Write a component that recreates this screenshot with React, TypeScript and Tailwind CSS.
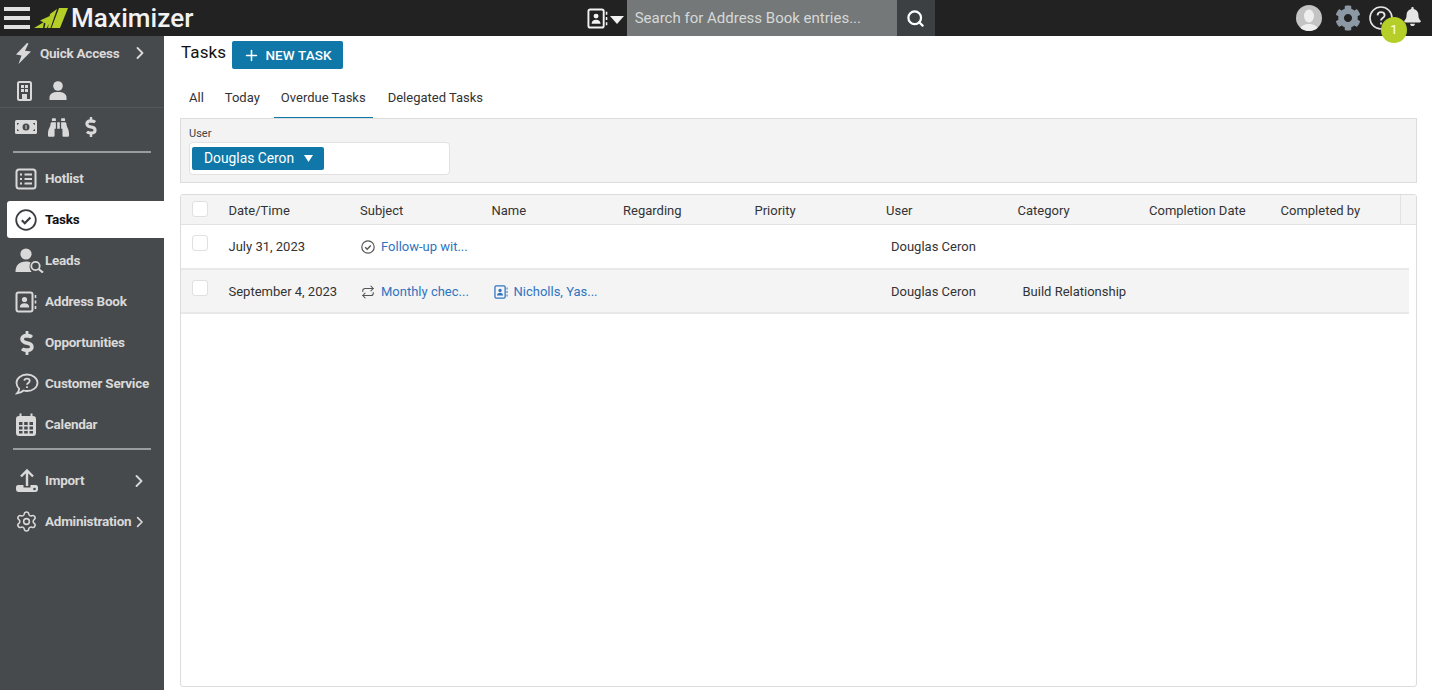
import { ChevronRight, Plus, Repeat, Search, Settings } from "lucide-react"
import { FaBell, FaBinoculars, FaCog, FaDollarSign } from "react-icons/fa"
import type { ReactNode } from "react"

const COLS = ["Date/Time", "Subject", "Name", "Regarding", "Priority", "User", "Category", "Completion Date", "Completed by"]

function AddressIcon({ size = 22, color = "#d9d9d9" }: { size?: number; color?: string }) {
  return (
    <svg width={size} height={size} viewBox="0 0 22 22" fill="none">
      <rect x="1.5" y="1.5" width="16" height="19" rx="2" stroke={color} strokeWidth="2" />
      <circle cx="9.5" cy="8.5" r="2.6" fill={color} />
      <path d="M4.8 16.5c0-3 2-4.3 4.7-4.3s4.7 1.3 4.7 4.3z" fill={color} />
      <path d="M20.5 4v3M20.5 9.5v3M20.5 15v3" stroke={color} strokeWidth="1.6" />
    </svg>
  )
}

function HotlistIcon() {
  return (
    <svg width="22" height="22" viewBox="0 0 22 22" fill="none" stroke="#d9d9d9" strokeWidth="2">
      <rect x="1.5" y="1.5" width="19" height="19" rx="2.5" />
      <path d="M5 6.5h2M5 11h2M5 15.5h2M9.5 6.5H17M9.5 11H17M9.5 15.5H17" />
    </svg>
  )
}

function TaskIcon() {
  return (
    <svg width="22" height="22" viewBox="0 0 22 22" fill="none" stroke="#3a3d40" strokeWidth="1.8">
      <circle cx="11" cy="11" r="9.8" />
      <path d="M6.8 11.2l3 3 5.6-5.8" strokeWidth="2.2" />
    </svg>
  )
}

function SmallCheck() {
  return (
    <svg width="14" height="14" viewBox="0 0 14 14" fill="none" stroke="#555" strokeWidth="1.2" className="ml-px mr-[6px]">
      <circle cx="7" cy="7" r="6.200" />
      <path d="M4.200 7.200l2 2 3.600-3.800" strokeWidth="1.400" />
    </svg>
  )
}

function LeadsIcon() {
  return (
    <svg width="29" height="25" viewBox="0 0 29 25" fill="none">
      <circle cx="11" cy="6" r="5.6" fill="#d9d9d9" />
      <path d="M0.500 24c0-7 4-10.500 10.500-10.500 2 0 3.300.3 4.600 1-1.700 2.700-1.400 6.600 1 9.500z" fill="#d9d9d9" />
      <circle cx="20.500" cy="18" r="4.200" stroke="#d9d9d9" strokeWidth="1.800" />
      <path d="M23.500 21l4.500 3.500" stroke="#d9d9d9" strokeWidth="2.200" />
    </svg>
  )
}

function ServiceIcon() {
  return (
    <svg width="24" height="22" viewBox="0 0 24 22" fill="none">
      <path d="M12 1.500c5.800 0 10.500 3.700 10.500 8.300S17.800 18 12 18c-1.200 0-2.300-.2-3.400-.5C6.800 19.200 5 20 2 20.300c1.300-1.400 2-2.800 2.200-4.500C2.500 14.300 1.500 12.200 1.500 9.800 1.500 5.200 6.200 1.500 12 1.500z" stroke="#d9d9d9" strokeWidth="1.8" />
      <path d="M9.300 7.700c.2-1.400 1.300-2.100 2.700-2.100 1.500 0 2.700.9 2.700 2.200 0 2.200-2.700 2.100-2.700 4M12 13.200v1.800" stroke="#d9d9d9" strokeWidth="1.800" />
    </svg>
  )
}

function CalendarIcon() {
  return (
    <svg width="22" height="24" viewBox="0 0 22 24" fill="none">
      <path d="M5.500 0.500v4M16.500 0.500v4" stroke="#d9d9d9" strokeWidth="2" />
      <rect x="1" y="3" width="20" height="20" rx="3" fill="#d9d9d9" />
      <g fill="#474a4d">
        <rect x="4" y="9" width="3.500" height="3" />
        <rect x="9.200" y="9" width="3.500" height="3" />
        <rect x="14.500" y="9" width="3.500" height="3" />
        <rect x="4" y="13.500" width="3.500" height="3" />
        <rect x="9.200" y="13.500" width="3.500" height="3" />
        <rect x="14.500" y="13.500" width="3.500" height="3" />
        <rect x="4" y="18" width="3.500" height="2.500" />
        <rect x="9.200" y="18" width="3.500" height="2.500" />
        <rect x="14.500" y="18" width="3.500" height="2.500" />
      </g>
    </svg>
  )
}

function ImportIcon() {
  return (
    <svg width="24" height="26" viewBox="0 0 24 26" fill="none">
      <path d="M12 18V3M6 8.500L12 2.500l6 6" stroke="#d9d9d9" strokeWidth="2.400" />
      <path d="M3 17h5.500v2.500h7V17H21c1.200 0 2 1 2 2.500v1.500c0 1.700-1 3-2.500 3h-17C2 24 1 22.700 1 21v-1.500C1 18 1.800 17 3 17z" fill="#d9d9d9" />
      <circle cx="19.500" cy="21" r="1.300" fill="#474a4d" />
    </svg>
  )
}

function BuildingIcon() {
  return (
    <svg width="15" height="20" viewBox="0 0 15 20" fill="none">
      <rect x="1" y="1" width="13" height="18" rx="1.500" stroke="#d9d9d9" strokeWidth="2" />
      <path d="M4 4h3v3H4zM8 4h3v3H8zM4 8h3v3H4zM8 8h3v3H8zM5 13h5v6H5z" fill="#d9d9d9" />
    </svg>
  )
}

function PersonIcon() {
  return (
    <svg width="18" height="19" viewBox="0 0 18 19" fill="#d9d9d9">
      <circle cx="9" cy="5" r="4.800" />
      <path d="M0.500 19v-2.500C0.500 13 3.500 11 9 11s8.500 2 8.500 5.500V19z" />
    </svg>
  )
}

function CashIcon() {
  return (
    <svg width="22" height="14" viewBox="0 0 22 14">
      <rect width="22" height="14" rx="1.500" fill="#d9d9d9" />
      <circle cx="11" cy="7" r="3.500" fill="#474a4d" />
      <path d="M10.500 5h1v4h-1z" fill="#d9d9d9" />
      <path d="M2 5a3 3 0 0 0 2-2h-2zM20 5a3 3 0 0 1-2-2h2zM2 9a3 3 0 0 1 2 2h-2zM20 9a3 3 0 0 0-2 2h2z" fill="#474a4d" />
    </svg>
  )
}

function BoltIcon() {
  return (
    <svg width="17" height="21" viewBox="0 0 17 21" fill="#d9d9d9">
      <path d="M12 0L1 11.500l5.500 1L3.500 21 16 8.500l-6-.800L13.500.500z" />
    </svg>
  )
}

function Logo() {
  return (
    <svg width="34" height="21" viewBox="0 0 34 21">
      <path d="M0 20l10-6-1 6zM6 12.500L18 7l-5 13h-2.500l1-4.500zM16 6l7-5-6.500 19H14z" fill="#b5cf28" />
      <path d="M25 0h9l-8 20h-8.500z" fill="#b5cf28" />
    </svg>
  )
}

function NavRow({ icon, label, chevron, active }: { icon: ReactNode; label: string; chevron?: boolean; active?: boolean }) {
  return (
    <div className={active ? "ml-[7px] h-[37px] flex items-center bg-white rounded-l-[3px] text-[#111]" : "ml-[7px] h-[41px] flex items-center text-[#d9d9d9]"}>
      <div className="w-[38px] pl-[8px] shrink-0 flex items-center">{icon}</div>
      <span className="text-[13.500px] font-bold tracking-[-0.250px]">{label}</span>
      {chevron && <ChevronRight className="ml-auto mr-[15px]" size={20} color="#d9d9d9" strokeWidth={2.200} />}
    </div>
  )
}

function Sidebar() {
  return (
    <aside className="w-[164px] shrink-0 bg-[#474a4d] flex flex-col">
      <div className="h-[34px] flex items-center pl-[15px] text-[#d9d9d9]">
        <BoltIcon />
        <span className="ml-[8px] text-[13.500px] font-bold tracking-[-0.250px]">Quick Access</span>
        <ChevronRight className="ml-auto mr-[14px]" size={20} strokeWidth={2.200} />
      </div>
      <div className="h-[38px] pt-[4px] flex items-center gap-[17px] pl-[17px] border-b border-[#55585b]">
        <BuildingIcon />
        <PersonIcon />
      </div>
      <div className="h-[36px] pt-[2px] flex items-center pl-[15px] text-[#d9d9d9]">
        <CashIcon />
        <FaBinoculars className="ml-[11px]" size={21} />
        <FaDollarSign className="ml-[12px]" size={20} />
      </div>
      <div className="mx-[13px] mt-[7px] h-[2px] bg-[#9a9c9d]" />
      <div className="mt-[5px] flex flex-col">
        <NavRow icon={<HotlistIcon />} label="Hotlist" />
        <div className="h-[41px] flex items-center">
          <div className="w-full">
            <NavRow icon={<TaskIcon />} label="Tasks" active />
          </div>
        </div>
        <NavRow icon={<LeadsIcon />} label="Leads" />
        <NavRow icon={<AddressIcon />} label="Address Book" />
        <NavRow icon={<FaDollarSign className="text-[#d9d9d9]" size={24} />} label="Opportunities" />
        <NavRow icon={<ServiceIcon />} label="Customer Service" />
        <NavRow icon={<CalendarIcon />} label="Calendar" />
      </div>
      <div className="mx-[13px] mt-[3px] h-[2px] bg-[#9a9c9d]" />
      <div className="mt-[10px] flex flex-col">
        <NavRow icon={<ImportIcon />} label="Import" chevron />
        <NavRow icon={<Settings size={23} color="#d9d9d9" strokeWidth={1.600} />} label="Administration" chevron />
      </div>
    </aside>
  )
}

function Header() {
  return (
    <header className="h-[36px] bg-[#222222] flex items-center">
      <div className="ml-[4px] flex flex-col gap-[5px]">
        <div className="w-[26px] h-[4px] bg-[#e0e0e0]" />
        <div className="w-[26px] h-[4px] bg-[#e0e0e0]" />
        <div className="w-[26px] h-[4px] bg-[#e0e0e0]" />
      </div>
      <div className="ml-[4px]">
        <Logo />
      </div>
      <span className="ml-[3px] text-[26px] font-medium text-[#f2f2f2] tracking-[0.100px]">Maximizer</span>
      <div className="ml-[393px] flex items-center">
        <AddressIcon size={21} color="#f2f2f2" />
        <svg width="14" height="8" viewBox="0 0 14 8" className="ml-[2px] mt-[4px]">
          <path d="M0 0h14L7 8z" fill="#f2f2f2" />
        </svg>
      </div>
      <div className="ml-[3px] w-[270px] h-full bg-[#757878] flex items-center pl-[8px] pt-[1px] text-[15px] text-[#d6d8d8]">
        Search for Address Book entries...
      </div>
      <div className="w-[38px] h-full bg-[#3d4042] flex items-center justify-center">
        <Search size={19} color="#fff" strokeWidth={2.800} />
      </div>
      <div className="ml-auto mr-[10px] flex items-center relative">
        <div className="w-[26px] h-[26px] rounded-full bg-[#c4c4c4] overflow-hidden">
          <svg width="26" height="26" viewBox="0 0 26 26">
            <ellipse cx="13" cy="11" rx="5" ry="6.500" fill="#efefef" />
            <path d="M4 26c0-5 4-7 9-7s9 2 9 7z" fill="#efefef" />
          </svg>
        </div>
        <FaCog className="ml-[13px]" size={26} color="#8c98a4" />
        <svg width="24" height="24" viewBox="0 0 24 24" className="ml-[8px]" fill="none" stroke="#e6e6e6" strokeWidth="1.600">
          <circle cx="12" cy="12" r="11" />
          <path d="M8.500 9.300C8.700 7.300 10.200 6.200 12 6.200c2 0 3.600 1.200 3.600 3 0 2.800-3.600 2.800-3.600 5.300M12 16.500v2" strokeWidth="1.800" />
        </svg>
        <FaBell className="ml-[10px] mb-[4px]" size={19} color="#e6e6e6" />
        <div className="absolute left-[85px] top-[12px] w-[26px] h-[26px] rounded-full bg-[#b5cf28] text-white text-[13px] flex items-center justify-center">
          1
        </div>
      </div>
    </header>
  )
}

function Checkbox() {
  return <div className="w-[16px] h-[16px] rounded-[3px] bg-white border border-[#e0e0e0]" />
}

function Main() {
  return (
    <main className="flex-1 min-w-0 pl-[16px] pr-[15px] pb-[3px] flex flex-col">
      <div className="h-[28px] mt-[5px] flex items-center">
        <h1 className="w-[46px] pl-px -mt-[5px] text-[17px] text-[#111] font-normal tracking-[0.100px]">Tasks</h1>
        <button className="ml-[6px] w-[111px] h-[28px] rounded-[2px] bg-[#0f78a8] text-white flex items-center justify-center gap-[5px] text-[13.500px] font-medium tracking-[0.100px]">
          <Plus size={17} strokeWidth={2.200} />
          NEW TASK
        </button>
      </div>
      <nav className="mt-[9px] h-[41px] flex text-[13px] text-[#333]">
        <div className="px-[9px] flex items-center border-b-2 border-transparent">All</div>
        <div className="ml-[3px] px-[9px] flex items-center border-b-2 border-transparent">Today</div>
        <div className="ml-[5px] px-[7px] flex items-center border-b-2 border-[#0f78a8]">Overdue Tasks</div>
        <div className="ml-[7px] px-[8px] flex items-center border-b-2 border-transparent">Delegated Tasks</div>
      </nav>
      <div className="-mt-px h-[65px] bg-[#f3f3f3] border border-[#dcdcdc] pl-[8px] pt-[8px]">
        <div className="text-[11px] leading-[13px] text-[#444]">User</div>
        <div className="mt-[2px] w-[261px] h-[33px] bg-white border border-[#e2e2e2] rounded-[4px] flex items-center pl-[2px]">
          <div className="w-[132px] h-[23px] bg-[#0f78a8] rounded-[2px] text-white text-[13.800px] flex items-center pl-[12px]">
            Douglas Ceron
            <svg width="9" height="7" viewBox="0 0 9 7" className="ml-[10px]">
              <path d="M0 0h9L4.500 7z" fill="#fff" />
            </svg>
          </div>
        </div>
      </div>
      <section className="mt-[11px] flex-1 border border-[#dcdcdc] rounded-[3px] overflow-hidden">
        <div className="h-[30px] bg-[#f4f4f4] border-b border-[#e2e2e2] flex items-center relative pr-[15px]">
          <div className="w-[43px] pl-[11px] shrink-0 flex -mt-[2px]">
            <Checkbox />
          </div>
          <div className="flex-1 grid grid-cols-[repeat(9,131.500px)] pl-[4.500px] pt-[2px] text-[13px] text-[#333]">
            {COLS.map((c) => (
              <div key={c}>{c}</div>
            ))}
          </div>
          <div className="absolute right-[15px] top-0 bottom-0 w-px bg-[#e2e2e2]" />
        </div>
        <div className="mr-[7px]">
          <div className="h-[45px] border-b-2 border-[#e8e8e8] flex items-center text-[13px] text-[#333]">
            <div className="w-[43px] pl-[11px] shrink-0 flex -mt-[7px]">
              <Checkbox />
            </div>
            <div className="grid grid-cols-[repeat(9,131.500px)] pl-[4.500px] pt-[1px] items-center">
              <div>July 31, 2023</div>
              <div className="flex items-center text-[#2f74c0]">
                <SmallCheck />
                Follow-up wit...
              </div>
              <div />
              <div />
              <div />
              <div className="pl-[5px]">Douglas Ceron</div>
            </div>
          </div>
          <div className="h-[44px] bg-[#f4f4f4] border-b-2 border-[#e8e8e8] flex items-center text-[13px] text-[#333]">
            <div className="w-[43px] pl-[11px] shrink-0 flex -mt-[6px]">
              <Checkbox />
            </div>
            <div className="grid grid-cols-[repeat(9,131.500px)] pl-[4.500px] pt-[1px] items-center">
              <div>September 4, 2023</div>
              <div className="flex items-center text-[#2f74c0]">
                <Repeat className="ml-px mr-[6px]" size={14} color="#555" strokeWidth={1.800} />
                Monthly chec...
              </div>
              <div className="flex items-center text-[#2f74c0] pl-[2px]">
                <AddressIcon size={14} color="#2f74c0" />
                <span className="ml-[6px]">Nicholls, Yas...</span>
              </div>
              <div />
              <div />
              <div className="pl-[5px]">Douglas Ceron</div>
              <div className="pl-[5px] whitespace-nowrap">Build Relationship</div>
            </div>
          </div>
        </div>
      </section>
    </main>
  )
}

export default function App() {
  return (
    <div className="h-screen overflow-hidden flex flex-col bg-white font-['Roboto',sans-serif]">
      <Header />
      <div className="flex-1 min-h-0 flex">
        <Sidebar />
        <Main />
      </div>
    </div>
  )
}
